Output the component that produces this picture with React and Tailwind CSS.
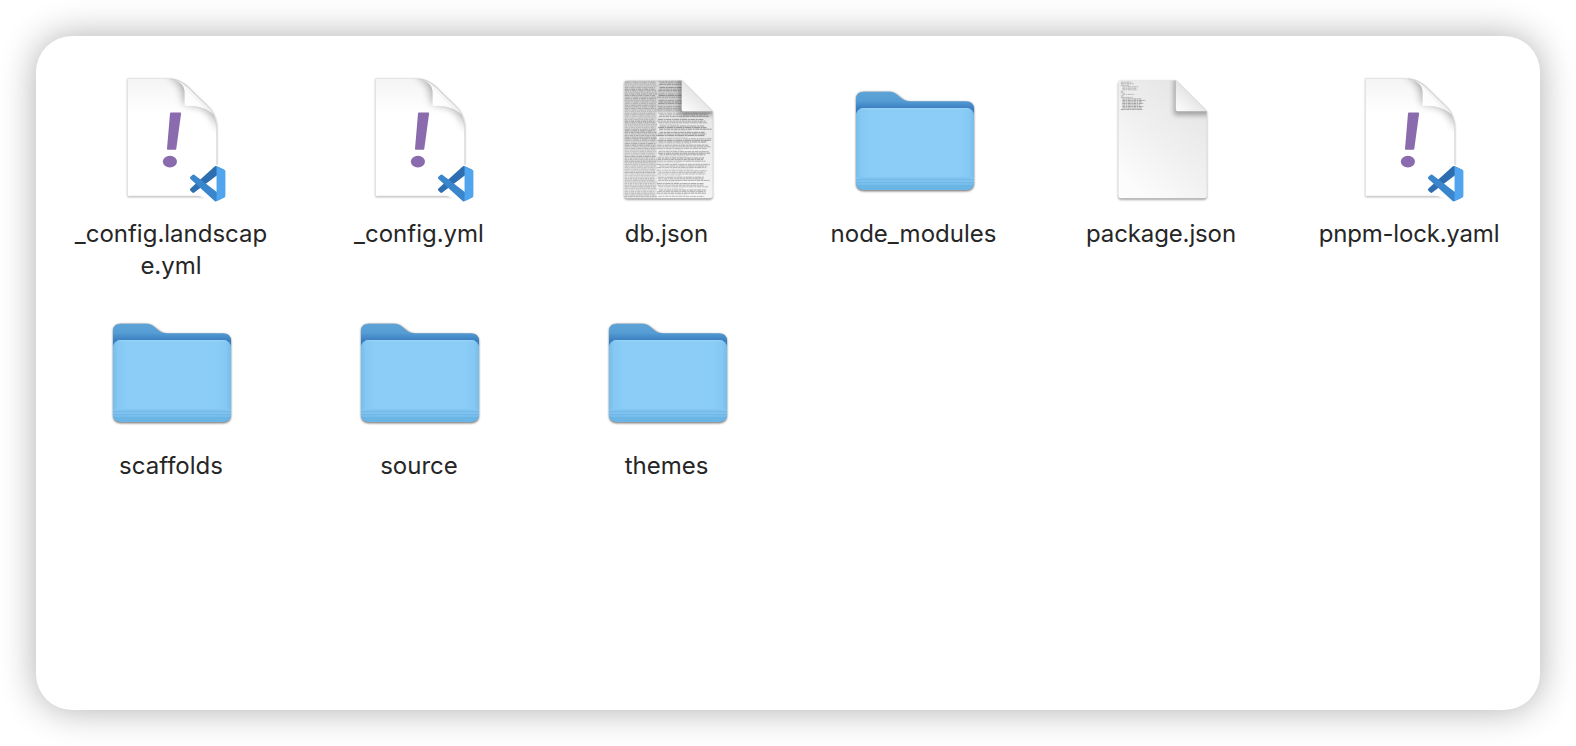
import React from "react";

function YamlIcon({ id }) {
  return (
    <svg viewBox="0 0 128 128" className="h-32 w-32 overflow-visible" aria-hidden="true">
      <defs>
        <linearGradient id={`${id}-page`} x1="0" y1="0" x2="0" y2="1">
          <stop offset="0" stopColor="#f4f4f4" />
          <stop offset="0.3" stopColor="#ffffff" />
        </linearGradient>
        <linearGradient id={`${id}-fold`} x1="76" y1="31" x2="91" y2="17" gradientUnits="userSpaceOnUse">
          <stop offset="0" stopColor="#ffffff" />
          <stop offset="0.55" stopColor="#fcfcfc" />
          <stop offset="1" stopColor="#dedede" />
        </linearGradient>
        <filter id={`${id}-blur`} x="-50%" y="-50%" width="200%" height="200%">
          <feGaussianBlur stdDeviation="4.5" />
        </filter>
        <filter id={`${id}-soft`} x="-10%" y="-10%" width="120%" height="120%">
          <feGaussianBlur stdDeviation="0.9" />
        </filter>
        <clipPath id={`${id}-clip`}>
          <path d="M19.5 4.5H57C69 4.5 76 9 82 15L97 29.5C105 37 108.5 44 108.5 56V122H19.5Z" />
        </clipPath>
      </defs>
      <path d="M19.5 5H57C69 5 76 9 82 15L97 30C105 37 109 44 109 56V123H19.5Z" fill="#000" opacity="0.34" filter={`url(#${id}-soft)`} />
      <path d="M19.5 4.5H57C69 4.5 76 9 82 15L97 29.5C105 37 108.5 44 108.5 56V122H19.5Z" fill={`url(#${id}-page)`} stroke="#e2e2e2" strokeWidth="0.7" />
      <g clipPath={`url(#${id}-clip)`}>
        <path d="M58 0C70 5 76 12 76 30C94 30 104 36 112 58V18L88 0Z" fill="#000" opacity="0.34" filter={`url(#${id}-blur)`} />
      </g>
      <path d="M66 5.4C72 8 76.5 11 76.6 18V31.7C90 31.2 99 34 106 41C104 36 101 33 97 29.5L82 15C77 10 72 7 66 5.4Z" fill={`url(#${id}-fold)`} />
      <path d="M62 4.8C70 5 76 9 82 15L97 29.5C101 33 104 36 106 41" fill="none" stroke="#cfcfcf" strokeWidth="0.7" />
      <path d="M63 38.5H72.3Q73.2 38.5 73.1 39.5L68.3 74.7Q68.2 75.7 67.2 75.7H59.7Q58.9 75.7 59 74.8L62 39.4Q62.1 38.5 63 38.5Z" fill="#8a6bad" />
      <ellipse cx="61.9" cy="87.6" rx="7.1" ry="5.9" fill="#8a6bad" />
      <g transform="translate(82 92) scale(0.354)">
        <path d="M96.5 10.8L75.9.9L1.3 30.3V69.7L75.9 99.1L96.5 89.2Z" fill="#fff" stroke="#fff" strokeWidth="9" strokeLinejoin="round" />
        <path d="M96.461 10.796L75.857.876a6.23 6.23 0 0 0-7.107 1.207l-67.451 61.5a4.167 4.167 0 0 0 .004 6.162l5.51 5.009a4.167 4.167 0 0 0 5.32.236l81.228-61.62c2.725-2.067 6.639-.124 6.639 3.297v-.24a6.25 6.25 0 0 0-3.539-5.63z" fill="#2d6db0" />
        <path d="M96.461 89.204l-20.604 9.92a6.229 6.229 0 0 1-7.107-1.207l-67.451-61.5a4.167 4.167 0 0 1 .004-6.162l5.51-5.009a4.167 4.167 0 0 1 5.32-.236l81.228 61.62c2.725 2.067 6.639.124 6.639-3.297v.24a6.25 6.25 0 0 1-3.539 5.63z" fill="#3a86cd" />
        <path d="M75.858 99.126a6.232 6.232 0 0 1-7.108-1.21c2.306 2.307 6.25.674 6.25-2.588V4.672c0-3.262-3.944-4.895-6.25-2.589a6.232 6.232 0 0 1 7.108-1.21l20.6 9.908A6.25 6.25 0 0 1 100 16.413v67.174a6.25 6.25 0 0 1-3.541 5.633l-20.601 9.906z" fill="#50a5ee" />
      </g>
    </svg>
  );
}

const pseudo = (n) => {
  const v = Math.sin(n * 12.9898) * 43758.5453;
  return v - Math.floor(v);
};

function DenseLines() {
  return (
    <g>
      <rect x="15.5" y="6" width="33" height="118" fill="#777" opacity="0.14" />
      <rect x="48.5" y="6" width="25" height="32" fill="#777" opacity="0.14" />
      {Array.from({ length: 73 }, (_, i) => {
        const y = 7 + i * 1.6;
        const gap = i % 4 === 3;
        const end = i < 20 ? 73 : gap ? 70 + pseudo(i) * 16 : 94 + pseudo(i) * 9;
        return (
          <g key={i} fill="none" stroke="#555" strokeWidth="0.9">
            <path d={`M16 ${y}H${46 + pseudo(i + 3) * 3}`} opacity={0.25 + pseudo(i + 5) * 0.3} strokeDasharray={`${2 + pseudo(i) * 4} 0.7 1.4 0.6`} />
            <path d={`M${48 + pseudo(i + 9) * 3} ${y}H${end}`} opacity={gap ? 0.18 : 0.42 + pseudo(i + 7) * 0.25} strokeDasharray={`${3 + pseudo(i + 2) * 4} 0.6 2 0.5`} />
          </g>
        );
      })}
    </g>
  );
}

const snippet = [
  [18, 11], [18, 13], [18, 9], [19.5, 16], [19.5, 14], [19.5, 15], [18, 2], [18, 4], [19.5, 12],
  [18, 3], [18, 12], [19.5, 19], [19.5, 23], [19.5, 20], [19.5, 21], [19.5, 18], [19.5, 21], [19.5, 20], [18, 22],
];

function JsonIcon({ id, dense }) {
  const dx = dense ? 4.7 : 4.8;
  return (
    <svg viewBox="0 0 128 128" className="h-32 w-32 overflow-visible" aria-hidden="true">
      <defs>
        <linearGradient id={`${id}-page`} x1="0.85" y1="0.15" x2="0.3" y2="1">
          <stop offset="0" stopColor="#e6e6e6" />
          <stop offset="0.5" stopColor="#f0f0f0" />
          <stop offset="1" stopColor="#fcfcfc" />
        </linearGradient>
        <linearGradient id={`${id}-fold`} x1="73" y1="38" x2="88" y2="21" gradientUnits="userSpaceOnUse">
          <stop offset="0" stopColor="#ffffff" />
          <stop offset="1" stopColor="#e6e6e6" />
        </linearGradient>
        <filter id={`${id}-soft`} x="-10%" y="-10%" width="120%" height="120%">
          <feGaussianBlur stdDeviation="1.1" />
        </filter>
        <filter id={`${id}-blur`} x="-50%" y="-50%" width="200%" height="200%">
          <feGaussianBlur stdDeviation="2.8" />
        </filter>
        <clipPath id={`${id}-clip`}>
          <path d="M18.5 6H73L104 37V121Q104 124 101 124H18.5Q15.5 124 15.5 121V9Q15.5 6 18.5 6Z" />
        </clipPath>
      </defs>
      <g transform={`translate(${dx} 0.2)`}>
        <path d="M18.5 7H73L104 38V122.5Q104 125.5 101 125.5H18.5Q15.5 125.5 15.5 122.5V10Q15.5 7 18.5 7Z" fill="#000" opacity="0.4" filter={`url(#${id}-soft)`} />
        <path d="M18.5 6H73L104 37V121Q104 124 101 124H18.5Q15.5 124 15.5 121V9Q15.5 6 18.5 6Z" fill={`url(#${id}-page)`} />
        <g clipPath={`url(#${id}-clip)`}>
          {dense ? <DenseLines /> : snippet.map(([x, w], i) => (
            <path key={i} d={`M${x} ${8 + i * 1.52}h${w}`} stroke="#666" strokeWidth="0.8" opacity={i > 10 ? 0.7 : 0.5} strokeDasharray="3 0.5 1.5 0.5" />
          ))}
          <path d="M71 4V38.5Q71 41 74 41H108V34L76 4Z" fill="#000" opacity="0.3" filter={`url(#${id}-blur)`} />
        </g>
        <path d="M73 6L104 37H75Q73 37 73 35Z" fill={`url(#${id}-fold)`} />
      </g>
    </svg>
  );
}

function FolderIcon({ id }) {
  return (
    <svg viewBox="0 0 128 128" className="h-32 w-32 overflow-visible" aria-hidden="true">
      <defs>
        <linearGradient id={`${id}-back`} x1="0" y1="17.5" x2="0" y2="36" gradientUnits="userSpaceOnUse">
          <stop offset="0" stopColor="#5da4d8" />
          <stop offset="0.5" stopColor="#559dd4" />
          <stop offset="1" stopColor="#3578bd" />
        </linearGradient>
        <linearGradient id={`${id}-side`} x1="0" y1="0" x2="1" y2="0">
          <stop offset="0" stopColor="#76beeb" />
          <stop offset="0.04" stopColor="#84c8f3" />
          <stop offset="0.12" stopColor="#8bcdf7" />
          <stop offset="0.88" stopColor="#8bcdf7" />
          <stop offset="0.96" stopColor="#84c8f3" />
          <stop offset="1" stopColor="#76beeb" />
        </linearGradient>
        <filter id={`${id}-soft`} x="-10%" y="-10%" width="120%" height="120%">
          <feGaussianBlur stdDeviation="1" />
        </filter>
        <clipPath id={`${id}-front`}>
          <rect x="5" y="34.2" width="118" height="81.5" rx="7" />
        </clipPath>
      </defs>
      <path d="M5 26Q5 18 13 18H38C48 18 50 28 60 28H115Q123 28 123 36V109.5Q123 117.3 115 117.3H13Q5 117.3 5 109.5Z" fill="#000" opacity="0.55" filter={`url(#${id}-soft)`} />
      <path d="M5 25Q5 17.8 13 17.8H38C48 17.8 48 27.2 59 27.2H115Q123 27.2 123 35V108Q123 115.7 115 115.7H13Q5 115.7 5 108Z" fill={`url(#${id}-back)`} />
      <g clipPath={`url(#${id}-front)`}>
        <rect x="5" y="34" width="118" height="82" fill={`url(#${id}-side)`} />
        <rect x="5" y="34" width="118" height="1.2" fill="#a0d9fa" />
        <rect x="5" y="103" width="118" height="2" fill="#80c5f2" />
        <rect x="5" y="105" width="118" height="1.2" fill="#73b8e6" />
        <rect x="5" y="106.2" width="118" height="2" fill="#7dc2ef" />
        <rect x="5" y="108.2" width="118" height="1" fill="#6eb4e3" />
        <rect x="5" y="109.2" width="118" height="1.8" fill="#77bdec" />
        <rect x="5" y="111" width="118" height="5" fill="#6bb4e6" />
      </g>
    </svg>
  );
}

const files = [
  { id: "landscape", type: "yaml", lines: ["_config.landscap", "e.yml"], tracking: "tracking-normal" },
  { id: "config", type: "yaml", lines: ["_config.yml"], tracking: "tracking-normal" },
  { id: "db", type: "dense", lines: ["db.json"], tracking: "tracking-normal" },
  { id: "modules", type: "folder", lines: ["node_modules"], tracking: "tracking-normal" },
  { id: "package", type: "json", lines: ["package.json"], tracking: "tracking-[-0.13px]" },
  { id: "lock", type: "yaml", lines: ["pnpm-lock.yaml"], tracking: "tracking-[-0.2px]" },
  { id: "scaffolds", type: "folder", lines: ["scaffolds"], tracking: "tracking-normal" },
  { id: "source", type: "folder", lines: ["source"], tracking: "tracking-normal" },
  { id: "themes", type: "folder", lines: ["themes"], tracking: "tracking-normal" },
];

function FileItem({ file }) {
  return (
    <div className="flex flex-col items-center">
      <div className="ml-[2px]">
        {file.type === "yaml" && <YamlIcon id={file.id} />}
        {file.type === "folder" && <FolderIcon id={file.id} />}
        {(file.type === "dense" || file.type === "json") && <JsonIcon id={file.id} dense={file.type === "dense"} />}
      </div>
      <div className={`mt-[16px] text-center text-[24px] leading-[32px] text-[#262626] ${file.tracking}`}>
        {file.lines.map((line) => (
          <div key={line}>{line}</div>
        ))}
      </div>
    </div>
  );
}

export default function App() {
  return (
    <div className="h-[746px] w-[1576px] overflow-hidden bg-white p-9 font-['Inter',sans-serif]">
      <main className="h-[674px] w-[1504px] rounded-[36px] bg-white pt-[38px] pl-[11px] shadow-[0_0_36px_rgba(0,0,0,0.32)]">
        <div className="grid grid-cols-[248px_248px_247px_247px_248px_248px] auto-rows-[232px]">
          {files.map((file) => (
            <FileItem key={file.id} file={file} />
          ))}
        </div>
      </main>
    </div>
  );
}
